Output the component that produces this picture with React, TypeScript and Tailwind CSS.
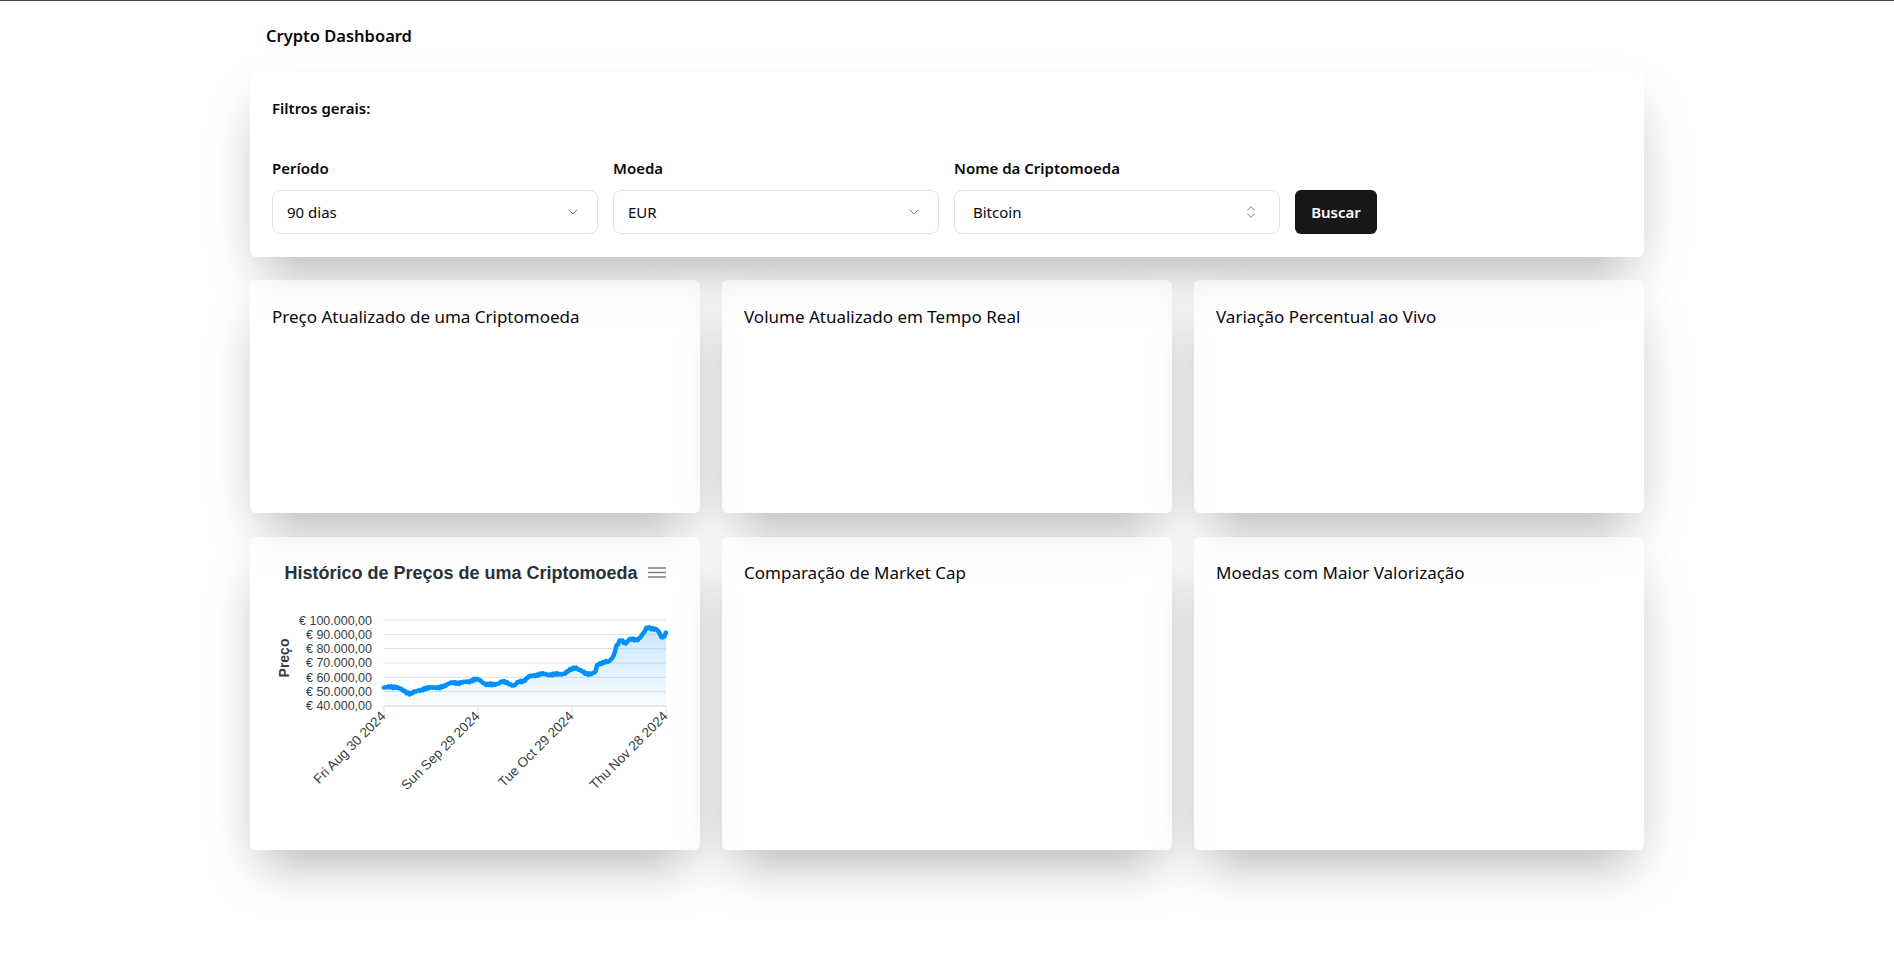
import React from 'react';
import { ChevronDown, ChevronsUpDown } from 'lucide-react';

const font = { fontFamily: '"Noto Sans", "Open Sans", sans-serif' };

// rough BTC/EUR curve, chart-local coords (card origin)
const controlPoints: [number, number][] = [
  [134, 150.7], [145.7, 149.7], [152.3, 153], [160.7, 157], [169, 153], [175.7, 152],
  [182.3, 149.7], [189, 151.3], [192.3, 149.7], [199, 146.3], [209, 145.7], [219, 144.7],
  [224, 142.3], [229, 143], [235.7, 147], [242.3, 148], [252.3, 144.7], [259, 146.3],
  [264, 149], [269, 144.7], [274, 143.7], [279, 139.7], [285.7, 138], [292.3, 137],
  [302.3, 137.7], [309, 137], [315.7, 136.3], [322.3, 131.3], [325.7, 130.3], [329, 133],
  [335.7, 136.3], [342.3, 137], [345.7, 134.7], [347.3, 127], [352.3, 125.7], [359, 124.7],
  [364, 118], [365.7, 110.3], [370.7, 103], [375.7, 106.3], [379, 102.3], [385.7, 103],
  [389, 101.3], [394, 95.7], [397.3, 90.3], [402.3, 91.3], [407.3, 93], [412.3, 101.3],
  [416, 95.7],
];

function buildLine() {
  const pts: string[] = [];
  for (let x = 134; x <= 416; x += 1.5) {
    let i = 0;
    while (i < controlPoints.length - 2 && controlPoints[i + 1][0] < x) i++;
    const [x0, y0] = controlPoints[i];
    const [x1, y1] = controlPoints[i + 1];
    const t = Math.min(1, Math.max(0, (x - x0) / (x1 - x0)));
    const noise = x > 135 && x < 415 ? 0.7 * Math.sin(x * 1.9) + 0.5 * Math.sin(x * 3.7 + 1) : 0;
    pts.push(`${x.toFixed(1)},${(y0 + (y1 - y0) * t + noise).toFixed(1)}`);
  }
  return pts;
}

const linePts = buildLine();
const linePath = 'M' + linePts.join(' L');
const areaPath = linePath + ' L416,169 L134,169 Z';

const yLabels = ['100.000,00', '90.000,00', '80.000,00', '70.000,00', '60.000,00', '50.000,00', '40.000,00'];
const xTicks = [
  { x: 134, label: 'Fri Aug 30 2024' },
  { x: 228, label: 'Sun Sep 29 2024' },
  { x: 322, label: 'Tue Oct 29 2024' },
  { x: 416, label: 'Thu Nov 28 2024' },
];

const Card: React.FC<{ className?: string; children?: React.ReactNode }> = ({ className = '', children }) => (
  <div className={`bg-white/60 rounded-md shadow-[0_25px_50px_-12px_rgba(0,0,0,0.3)] ${className}`}>{children}</div>
);

const PriceHistoryChart = () => (
  <svg width="450" height="313" viewBox="0 0 450 313" className="block" style={{ fontFamily: '"Liberation Sans", Arial, sans-serif' }}>
    <defs>
      <linearGradient id="areaFill" x1="0" y1="0" x2="0" y2="1">
        <stop offset="0%" stopColor="#008FFB" stopOpacity="0.22" />
        <stop offset="100%" stopColor="#008FFB" stopOpacity="0.02" />
      </linearGradient>
    </defs>
    <text x="211" y="42" textAnchor="middle" fontSize="18" fontWeight="bold" fill="#263238">
      Histórico de Preços de uma Criptomoeda
    </text>
    {/* toolbar menu */}
    <g stroke="#6E8192" strokeWidth="1.6">
      <line x1="398" y1="31" x2="416" y2="31" />
      <line x1="398" y1="35.5" x2="416" y2="35.5" />
      <line x1="398" y1="40" x2="416" y2="40" />
    </g>
    {/* grid */}
    {yLabels.map((v, i) => {
      const y = 83 + i * 14.33;
      return (
        <g key={v}>
          <line x1="134" y1={y} x2="416" y2={y} stroke="#e0e0e0" strokeWidth="1" />
          <text x="122" y={y + 4.5} textAnchor="end" fontSize="12.5" fill="#373d3f">
            € {v}
          </text>
        </g>
      );
    })}
    <text x="0" y="0" transform="translate(39 121) rotate(-90)" textAnchor="middle" fontSize="14" fontWeight="bold" fill="#373d3f">
      Preço
    </text>
    <path d={areaPath} fill="url(#areaFill)" />
    <path d={linePath} fill="none" stroke="#008FFB" strokeWidth="4.5" strokeLinejoin="round" strokeLinecap="round" />
    <line x1="134" y1="169" x2="416" y2="169" stroke="#e0e0e0" />
    {xTicks.map((t) => (
      <g key={t.label}>
        <line x1={t.x} y1="169" x2={t.x} y2="175" stroke="#e0e0e0" />
        <text
          x={t.x + 2.5}
          y="180"
          textAnchor="end"
          fontSize="13.5"
          fill="#373d3f"
          transform={`rotate(-45 ${t.x + 2.5} 180)`}
        >
          {t.label}
        </text>
      </g>
    ))}
  </svg>
);

const SelectBox: React.FC<{ value: string; combo?: boolean }> = ({ value, combo }) => (
  <div
    className={`h-11 w-[326px] flex items-center justify-between border border-[#e4e4e7] rounded-lg bg-white ${
      combo ? 'pl-[18px] pr-[20px]' : 'pl-[14px] pr-[16px]'
    }`}
  >
    <span className="text-[15px] text-[#09090b]">{value}</span>
    {combo ? (
      <ChevronsUpDown className="w-4 h-4 text-[#09090b] opacity-50" strokeWidth={1.5} />
    ) : (
      <ChevronDown className="w-4 h-4 text-[#09090b] opacity-50" strokeWidth={1.5} />
    )}
  </div>
);

export default function App() {
  return (
    <div className="min-h-screen bg-white border-t border-[#444]" style={font}>
      <div className="w-[1394px] mx-auto">
        <header className="h-[71px] flex items-center px-4">
          <h1 className="text-[16.5px] font-semibold text-[#09090b]">Crypto Dashboard</h1>
        </header>

        <Card className="px-[22px] pt-6 pb-[23px]">
          <p className="text-[15px] leading-6 font-semibold text-[#09090b]">Filtros gerais:</p>
          <div className="mt-[38px] flex items-end gap-[15px]">
            <div className="flex flex-col gap-3">
              <label className="text-[15px] leading-5 font-semibold text-[#09090b]">Período</label>
              <SelectBox value="90 dias" />
            </div>
            <div className="flex flex-col gap-3">
              <label className="text-[15px] leading-5 font-semibold text-[#09090b]">Moeda</label>
              <SelectBox value="EUR" />
            </div>
            <div className="flex flex-col gap-3">
              <label className="text-[15px] leading-5 font-semibold text-[#09090b]">Nome da Criptomoeda</label>
              <SelectBox value="Bitcoin" combo />
            </div>
            <button className="h-11 w-[82px] rounded-md bg-[#18181b] text-white text-[15px] font-semibold">Buscar</button>
          </div>
        </Card>

        <div className="mt-[23px] grid grid-cols-3 gap-x-[22px] gap-y-6">
          <Card className="h-[233px] px-[22px] pt-[23px]">
            <h2 className="text-[17px] leading-7 text-[#09090b]">Preço Atualizado de uma Criptomoeda</h2>
          </Card>
          <Card className="h-[233px] px-[22px] pt-[23px]">
            <h2 className="text-[17px] leading-7 text-[#09090b]">Volume Atualizado em Tempo Real</h2>
          </Card>
          <Card className="h-[233px] px-[22px] pt-[23px]">
            <h2 className="text-[17px] leading-7 text-[#09090b]">Variação Percentual ao Vivo</h2>
          </Card>
          <Card className="h-[313px] overflow-hidden">
            <PriceHistoryChart />
          </Card>
          <Card className="h-[313px] px-[22px] pt-[22px]">
            <h2 className="text-[17px] leading-7 text-[#09090b]">Comparação de Market Cap</h2>
          </Card>
          <Card className="h-[313px] px-[22px] pt-[22px]">
            <h2 className="text-[17px] leading-7 text-[#09090b]">Moedas com Maior Valorização</h2>
          </Card>
        </div>
        <div className="h-24" />
      </div>
    </div>
  );
}
